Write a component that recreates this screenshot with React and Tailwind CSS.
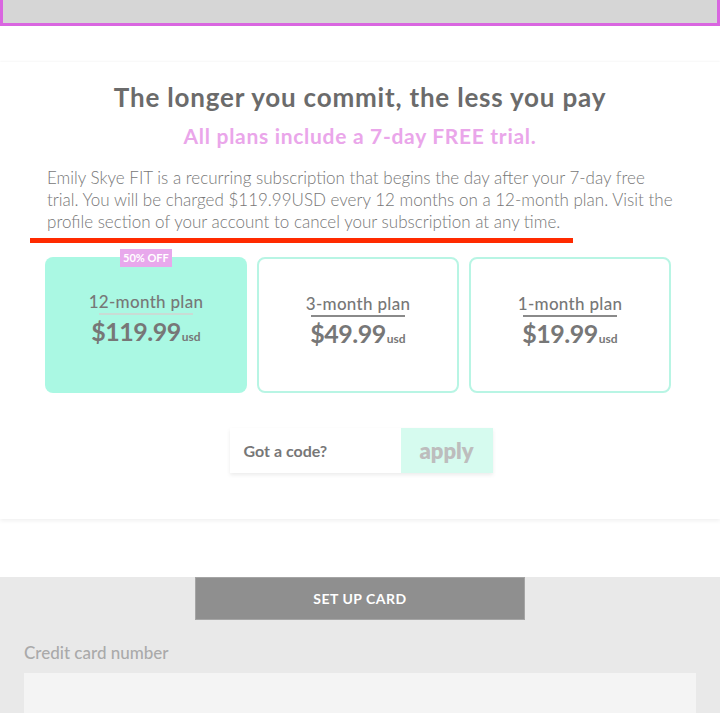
import React from "react";

const plans = [
  { name: "12-month plan", price: "$119.99", active: true },
  { name: "3-month plan", price: "$49.99" },
  { name: "1-month plan", price: "$19.99" },
];

function PlanCard({ plan }) {
  return (
    <div
      className={
        "relative h-[136px] rounded-lg flex flex-col items-center pt-[35px] " +
        (plan.active ? "bg-[#aaf8e3]" : "bg-white border-2 border-[#b8f5e4]")
      }
    >
      {plan.active && (
        <div className="absolute top-[-8px] left-[75px] bg-[#e8a8ec] text-white text-[11px] font-bold px-[3px] leading-[18px]">
          50% OFF
        </div>
      )}
      <div className="text-[17px] font-medium text-[#777] leading-[20px] tracking-[0.3px]">{plan.name}</div>
      <div className={"w-[94px] h-[2px] mt-[1px] " + (plan.active ? "bg-[#c9dcd5]" : "bg-[#8a8a8a]")} />
      <div className="flex items-baseline text-[#777]">
        <span className="text-[25px] font-bold leading-[32px] tracking-[-0.5px]">{plan.price}</span>
        <span className="text-[12px] font-bold ml-[1px]">usd</span>
      </div>
    </div>
  );
}

export default function App() {
  return (
    <div className="min-h-screen bg-white font-['Lato',sans-serif] overflow-hidden">
      <div className="h-[26px] bg-[#d6d6d6] border-[3px] border-t-0 border-[#d966e0]" />

      <div className="h-[36px]" />

      <section className="bg-white shadow-[0_2px_4px_rgba(0,0,0,0.06),0_-1px_2px_rgba(0,0,0,0.03)] pt-[20px] pb-[46px]">
        <h1 className="text-center text-[26px] font-bold text-[#6b6b6b] leading-[30px] tracking-[0.8px]">
          The longer you commit, the less you pay
        </h1>
        <p className="text-center text-[21px] font-bold text-[#eaa6ea] mt-[11px] leading-[26px] tracking-[0.7px]">
          All plans include a 7-day FREE trial.
        </p>
        <p className="ml-[47px] w-[650px] mt-[18px] text-[17px] font-light text-[#777] leading-[22px]">
          Emily Skye FIT is a recurring subscription that begins the day after your 7-day free
          <br />
          trial. You will be charged $119.99USD every 12 months on a 12-month plan. Visit the
          <br />
          profile section of your account to cancel your subscription at any time.
        </p>
        <div className="ml-[30px] w-[543px] h-[5px] bg-[#ff2a00] mt-[5px]" />

        <div className="grid grid-cols-3 gap-[10px] ml-[45px] mt-[14px] w-[626px]">
          {plans.map((p) => (
            <PlanCard key={p.name} plan={p} />
          ))}
        </div>

        <div className="flex justify-center mt-[35px]">
          <div className="flex shadow-[0_2px_4px_rgba(0,0,0,0.08)] ml-[2px]">
            <div className="w-[171px] h-[45px] bg-white flex items-center pl-[14px] text-[16px] font-bold text-[#777]">
              Got a code?
            </div>
            <div className="w-[92px] h-[45px] bg-[#d6fbef] flex items-center justify-center text-[22px] font-extrabold text-[#bdbdbd]">
              apply
            </div>
          </div>
        </div>
      </section>

      <div className="h-[58px]" />

      <section className="bg-[#e9e9e9] pb-[40px]">
        <div className="flex justify-center">
          <button className="w-[330px] h-[43px] bg-[#8f8f8f] border border-[#a5a5a5] text-white text-[14px] font-bold tracking-[0.5px]">
            SET UP CARD
          </button>
        </div>
        <div className="px-[24px] mt-[22px] text-[17px] text-[#aaa] font-medium leading-[22px]">Credit card number</div>
        <div className="mx-[24px] mt-[9px] h-[60px] bg-[#f4f4f4]" />
      </section>
    </div>
  );
}
